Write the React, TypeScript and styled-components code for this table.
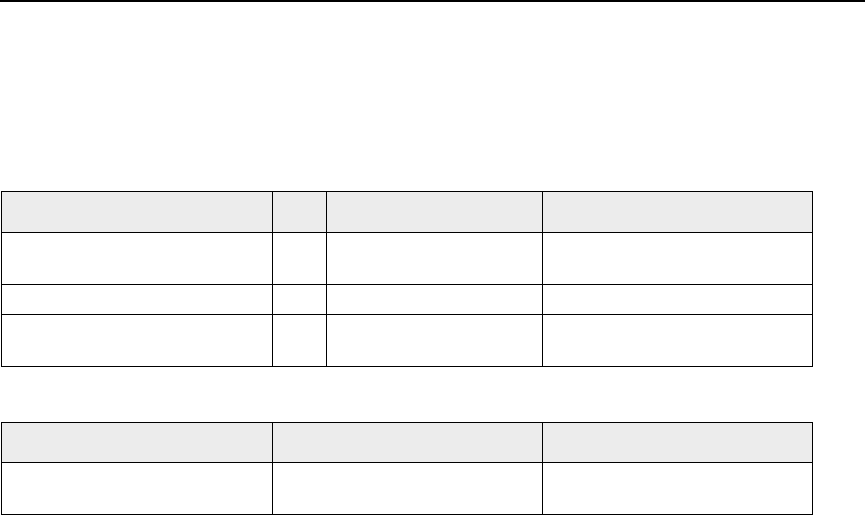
import React from 'react';
import styled, { createGlobalStyle } from 'styled-components';

const GlobalStyle = createGlobalStyle`
  html, body {
    margin: 0;
    padding: 0;
    background: #ffffff;
    font-family: "Liberation Sans", Arial, sans-serif;
  }
  * {
    box-sizing: border-box;
  }
`;

const Page = styled.div`
  width: 865px;
  height: 515px;
  overflow: hidden;
`;

const TopRule = styled.div`
  height: 2px;
  background: #000;
`;

const Content = styled.div`
  display: flex;
  flex-direction: column;
  gap: 55px;
  padding: 189px 0 0 1px;
`;

const Grid = styled.div<{ $cols: string }>`
  display: grid;
  grid-template-columns: ${({ $cols }) => $cols};
  border-top: 1px solid #000;
  border-left: 1px solid #000;
  width: max-content;
`;

const Cell = styled.div<{ $head?: boolean; $h: number }>`
  height: ${({ $h }) => $h}px;
  border-right: 1px solid #000;
  border-bottom: 1px solid #000;
  background: ${({ $head }) => ($head ? '#ececec' : '#ffffff')};
`;

interface TableProps {
  cols: number[];
  rows: number[];
}

const EmptyTable: React.FC<TableProps> = ({ cols, rows }) => (
  <Grid $cols={cols.map(c => `${c}px`).join(' ')}>
    {rows.map((h, r) =>
      cols.map((_, c) => <Cell key={`${r}-${c}`} $head={r === 0} $h={h} />)
    )}
  </Grid>
);

export default function App() {
  return (
    <Page>
      <GlobalStyle />
      <TopRule />
      <Content>
        <EmptyTable cols={[271, 54, 216, 270]} rows={[41, 52, 30, 52]} />
        <EmptyTable cols={[271, 270, 270]} rows={[40, 52]} />
      </Content>
    </Page>
  );
}
